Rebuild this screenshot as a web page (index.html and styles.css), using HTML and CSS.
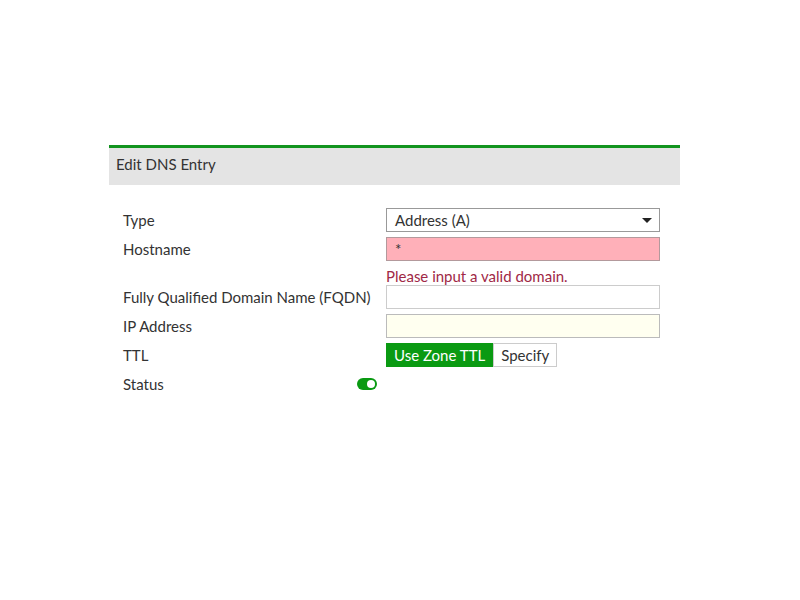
FILE: index.html
```html
<!DOCTYPE html>
<html>
<head>
  <meta charset="UTF-8">
  <title>Edit DNS Entry</title>
  <link rel="stylesheet" href="styles.css">
</head>
<body>
  <div class="dialog">
    <div class="dialog-header">Edit DNS Entry</div>
    <div class="form">
      <div class="row">
        <label class="field-label">Type</label>
        <div class="field">
          <div class="select">
            <span>Address (A)</span>
            <span class="caret"></span>
          </div>
        </div>
      </div>
      <div class="row">
        <label class="field-label">Hostname</label>
        <div class="field">
          <input type="text" class="input invalid" value="*">
        </div>
      </div>
      <div class="error-row">
        <div class="error-text">Please input a valid domain.</div>
      </div>
      <div class="row">
        <label class="field-label">Fully Qualified Domain Name (FQDN)</label>
        <div class="field">
          <input type="text" class="input">
        </div>
      </div>
      <div class="row">
        <label class="field-label">IP Address</label>
        <div class="field">
          <input type="text" class="input required">
        </div>
      </div>
      <div class="row">
        <label class="field-label">TTL</label>
        <div class="field">
          <div class="toggle-group">
            <button class="active">Use Zone TTL</button>
            <button>Specify</button>
          </div>
        </div>
      </div>
      <div class="row">
        <label class="field-label status-label">
          Status
          <span class="switch"><span class="knob"></span></span>
        </label>
      </div>
    </div>
  </div>
</body>
</html>
```

FILE: styles.css
```css
body {
  margin: 0;
  background: #fff;
  font-family: Lato, "Liberation Sans", sans-serif;
  font-size: 15px;
  color: #333;
}
.dialog {
  width: 571px;
  margin: 145px 0 0 109px;
}
.dialog-header {
  border-top: 3px solid #12941f;
  background: #e4e4e4;
  height: 37px;
  line-height: 32px;
  padding-left: 7px;
  font-size: 15px;
  color: #333;
}
.form {
  padding: 23px 20px 0 14px;
}
.row {
  display: flex;
  align-items: center;
  height: 24px;
  margin-bottom: 5px;
}
.field-label {
  width: 263px;
  flex-shrink: 0;
}
.field {
  flex: 1;
}
.select {
  box-sizing: border-box;
  height: 24px;
  border: 1px solid #999;
  display: flex;
  align-items: center;
  justify-content: space-between;
  padding: 0 7px 0 8px;
}
.caret {
  width: 0;
  height: 0;
  border-left: 5px solid transparent;
  border-right: 5px solid transparent;
  border-top: 5px solid #222;
}
.input {
  box-sizing: border-box;
  width: 100%;
  height: 24px;
  border: 1px solid #ccc;
  padding: 0 8px;
  font-family: inherit;
  font-size: 15px;
  color: #333;
  outline: none;
}
.input.invalid {
  background: #ffb0b9;
  border-color: #b3999c;
}
.input.required {
  background: #fffff0;
  border-color: #bbb;
}
.error-row {
  box-sizing: border-box;
  padding: 1px 0 0 263px;
  height: 19px;
}
.error-text {
  color: #a02846;
  line-height: 18px;
}
.toggle-group {
  display: flex;
}
.toggle-group button {
  height: 24px;
  border: 1px solid #ccc;
  background: #fff;
  font-family: inherit;
  font-size: 15px;
  color: #333;
  padding: 0 7px;
  cursor: pointer;
}
.toggle-group button.active {
  background: #0a9a12;
  border-color: #0a9a12;
  color: #fff;
}
.status-label {
  display: flex;
  align-items: center;
  justify-content: space-between;
  padding-right: 9px;
  box-sizing: border-box;
}
.switch {
  width: 20px;
  height: 12px;
  border-radius: 6px;
  background: #0a9a12;
  position: relative;
}
.knob {
  position: absolute;
  right: 2px;
  top: 2px;
  width: 8px;
  height: 8px;
  border-radius: 50%;
  background: #fff;
}
```
